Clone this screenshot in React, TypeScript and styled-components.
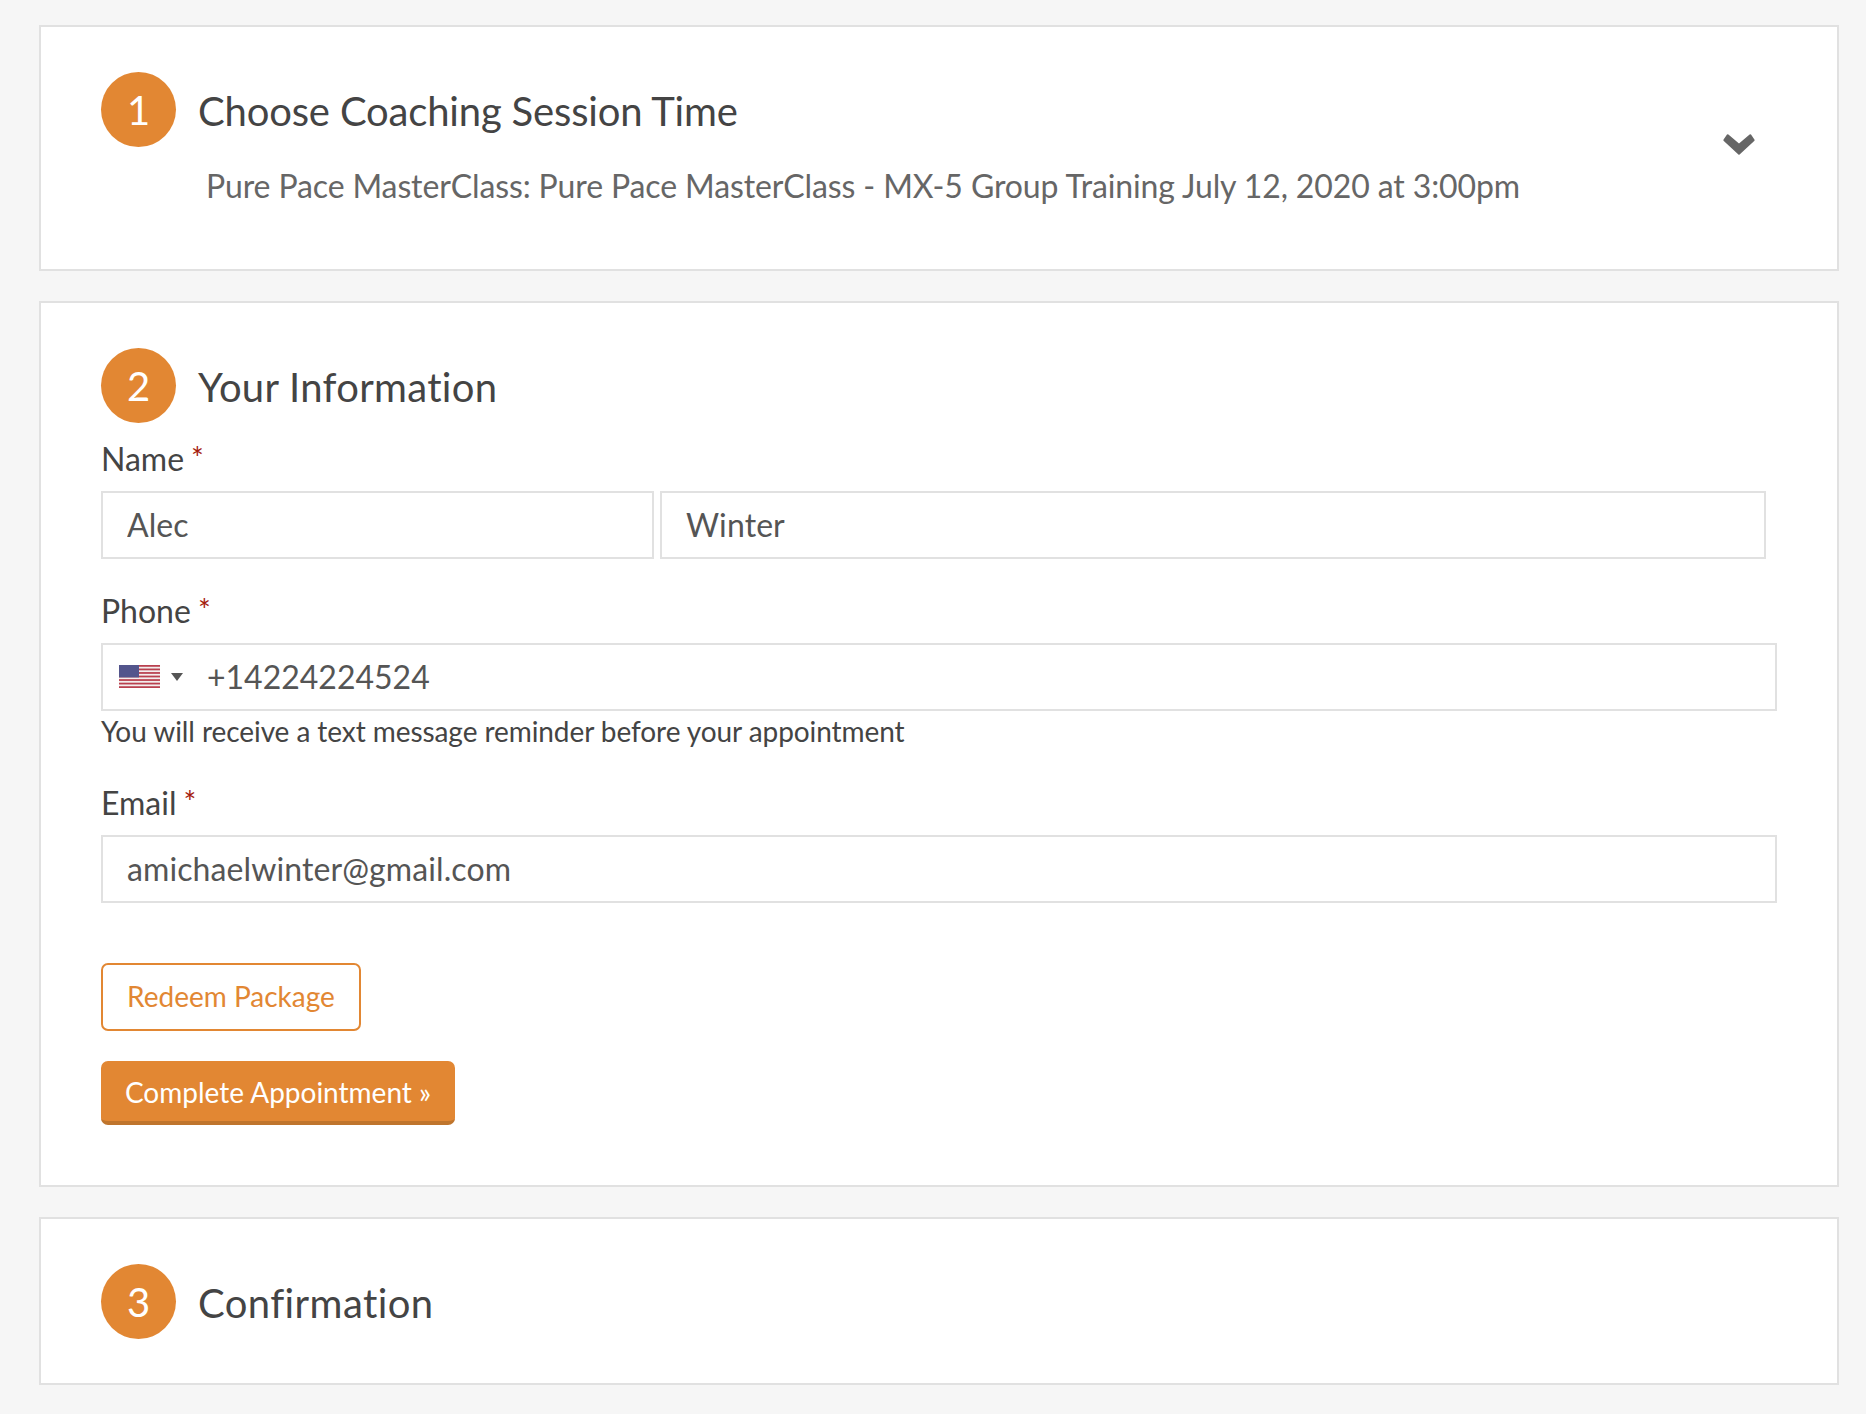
import React from 'react';
import styled, { createGlobalStyle } from 'styled-components';

const GlobalStyle = createGlobalStyle`
  html, body {
    margin: 0;
    padding: 0;
    background: #f6f6f6;
    font-family: "Lato", "Liberation Sans", sans-serif;
  }
  * { box-sizing: border-box; }
`;

const Page = styled.div`
  min-height: 1414px;
  padding: 25px 27px 29px 39px;
  display: flex;
  flex-direction: column;
  gap: 30px;
`;

const Card = styled.section`
  background: #fff;
  border: 2px solid #e1e1e1;
  padding: 45px 60px 44px 60px;
`;

const CollapsedCard = styled(Card)`
  height: 246px;
  padding-right: 82px;
  display: flex;
  justify-content: space-between;
  align-items: flex-start;
`;

const FormCard = styled(Card)`
  padding-bottom: 60px;
`;

const StepHeader = styled.div`
  display: flex;
  align-items: center;
  gap: 22px;
  height: 75px;
`;

const StepNumber = styled.div`
  width: 75px;
  height: 75px;
  flex: none;
  border-radius: 50%;
  background: #e28733;
  color: #fff;
  font-size: 40px;
  display: flex;
  align-items: center;
  justify-content: center;
`;

const StepTitle = styled.h2<{ $tracking: number }>`
  margin: 0;
  padding-top: 3px;
  font-size: 40px;
  font-weight: 400;
  letter-spacing: ${(p) => p.$tracking}px;
  color: #444;
`;

const Summary = styled.p`
  margin: 19px 0 0 105px;
  font-size: 32px;
  line-height: 40px;
  letter-spacing: -0.12px;
  color: #666;
`;

const Chevron = styled.svg`
  width: 32px;
  height: 22px;
  flex: none;
  align-self: center;
  margin-bottom: 9px;
  fill: #666;
`;

const Field = styled.div`
  margin-top: 27px;
`;

const FirstField = styled(Field)`
  margin-top: 11px;
`;

const Label = styled.label`
  display: block;
  margin-bottom: 7px;
  font-size: 32px;
  line-height: 50px;
  color: #444;
`;

const Star = styled.span`
  color: #a51c0e;
  font-size: 30px;
  line-height: 0;
  margin-left: 7px;
  vertical-align: 2px;
`;

const NameRow = styled.div`
  display: flex;
  gap: 6px;
  width: 1665px;
`;

const TextInput = styled.input`
  display: block;
  width: 100%;
  min-width: 0;
  height: 68px;
  padding: 0 24px 2px;
  border: 2px solid #e1e1e1;
  border-radius: 0;
  outline: none;
  background: #fff;
  font-family: inherit;
  font-size: 32px;
  letter-spacing: 0.1px;
  color: #555;
`;

const FirstNameInput = styled(TextInput)`
  width: 553px;
  flex: none;
`;

const LastNameInput = styled(TextInput)`
  flex: 1;
`;

const PhoneBox = styled.div`
  position: relative;
`;

const PhoneInput = styled(TextInput)`
  padding-left: 104px;
  letter-spacing: 0;
`;

const CountryPicker = styled.div`
  position: absolute;
  left: 18px;
  top: 22px;
  display: flex;
  align-items: center;
  gap: 11px;
`;

const Caret = styled.span`
  width: 0;
  height: 0;
  border-left: 6px solid transparent;
  border-right: 6px solid transparent;
  border-top: 8px solid #555;
`;

const Hint = styled.p`
  margin: 0;
  font-size: 28px;
  line-height: 40px;
  letter-spacing: -0.07px;
  color: #444;
`;

const Actions = styled.div`
  margin-top: 60px;
  display: flex;
  flex-direction: column;
  align-items: flex-start;
  gap: 30px;
`;

const RedeemButton = styled.button`
  width: 260px;
  height: 68px;
  padding: 0 0 2px;
  background: #fff;
  border: 2px solid #e28733;
  border-radius: 7px;
  font-family: inherit;
  font-size: 28px;
  color: #e28733;
`;

const CompleteButton = styled.button`
  width: 354px;
  height: 64px;
  padding: 2px 0 0;
  background: #e28733;
  border: none;
  border-bottom: 4px solid #bf752d;
  border-radius: 7px;
  font-family: inherit;
  font-size: 28px;
  color: #fff;
`;

const UsFlag = () => (
  <svg width="41" height="23" viewBox="0 0 41 23">
    <rect width="41" height="23" fill="#f4eeee" />
    {[0, 2, 4, 6, 8, 10, 12].map((i) => (
      <rect key={i} y={i * (23 / 13)} width="41" height={23 / 13} fill="#b9414f" />
    ))}
    <rect width="20" height="12.4" fill="#53558c" />
  </svg>
);

export default function App() {
  return (
    <>
      <GlobalStyle />
      <Page>
        <CollapsedCard>
          <div>
            <StepHeader>
              <StepNumber>1</StepNumber>
              <StepTitle $tracking={-0.17}>Choose Coaching Session Time</StepTitle>
            </StepHeader>
            <Summary>Pure Pace MasterClass: Pure Pace MasterClass - MX-5 Group Training July 12, 2020 at 3:00pm</Summary>
          </div>
          <Chevron viewBox="0 0 32 22">
            <path d="M.6 6.6 4 1.6a1 1 0 0 1 1.4-.2L16 10.6l10.6-9.2a1 1 0 0 1 1.4.2l3.4 5a1 1 0 0 1-.2 1.3L16.6 21.6a1 1 0 0 1-1.2 0L.8 7.9a1 1 0 0 1-.2-1.3Z" />
          </Chevron>
        </CollapsedCard>

        <FormCard>
          <StepHeader>
            <StepNumber>2</StepNumber>
            <StepTitle $tracking={0.3}>Your Information</StepTitle>
          </StepHeader>

          <FirstField>
            <Label>Name<Star>*</Star></Label>
            <NameRow>
              <FirstNameInput defaultValue="Alec" />
              <LastNameInput defaultValue="Winter" />
            </NameRow>
          </FirstField>

          <Field>
            <Label>Phone<Star>*</Star></Label>
            <PhoneBox>
              <CountryPicker>
                <UsFlag />
                <Caret />
              </CountryPicker>
              <PhoneInput defaultValue="+14224224524" />
            </PhoneBox>
            <Hint>You will receive a text message reminder before your appointment</Hint>
          </Field>

          <Field>
            <Label>Email<Star>*</Star></Label>
            <TextInput defaultValue="amichaelwinter@gmail.com" />
          </Field>

          <Actions>
            <RedeemButton>Redeem Package</RedeemButton>
            <CompleteButton>Complete Appointment »</CompleteButton>
          </Actions>
        </FormCard>

        <Card>
          <StepHeader>
            <StepNumber>3</StepNumber>
            <StepTitle $tracking={0.4}>Confirmation</StepTitle>
          </StepHeader>
        </Card>
      </Page>
    </>
  );
}
